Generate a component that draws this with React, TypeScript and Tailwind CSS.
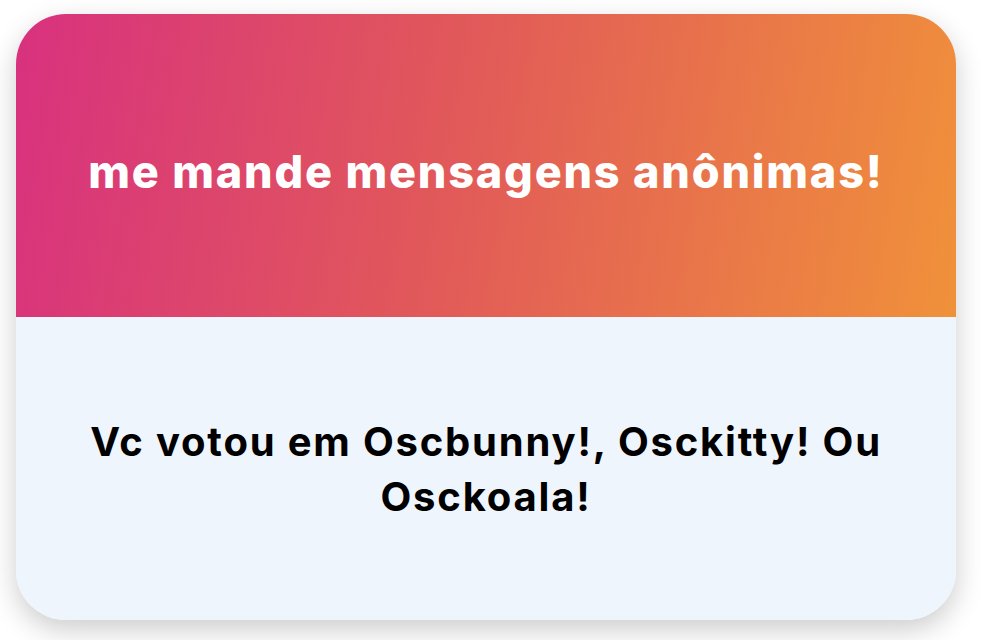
import * as React from "react"

const App: React.FC<{}> = () => {
    return (
        <div className="h-screen w-screen bg-white" style={{ fontFamily: "Inter, 'Liberation Sans', sans-serif" }}>
            <div className="pt-[14px] pl-[16px]">
                <div className="w-[940px] h-[606px] rounded-[50px] overflow-hidden flex flex-col shadow-[0_10px_28px_rgba(0,0,0,0.2)]">
                    <div className="h-[303px] flex items-center justify-center bg-[linear-gradient(100deg,#d8317f_0%,#e1585a_45%,#f0913a_100%)]">
                        <p className="text-white text-[45px] font-extrabold tracking-[1.8px] pt-3 whitespace-nowrap">me mande mensagens anônimas!</p>
                    </div>
                    <div className="flex-1 bg-[#eff5fd] flex items-center justify-center px-10">
                        <p className="text-black text-[40px] font-bold text-center leading-[55px] tracking-[1.8px]">
                            Vc votou em Oscbunny!, Osckitty! Ou Osckoala!
                        </p>
                    </div>
                </div>
            </div>
        </div>
    )
}

export default App
